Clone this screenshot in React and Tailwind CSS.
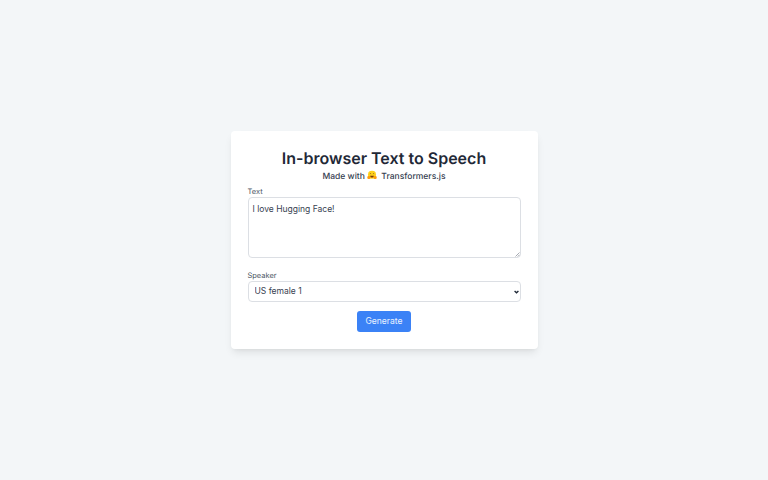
import { useState } from 'react'

function HugIcon() {
  return (
    <svg viewBox="0 0 16 16" className="inline-block w-[10px] h-[10px] mr-[2px] align-[-1.500px]">
      <circle cx="8" cy="7.500" r="6.500" fill="#FFD21E" />
      <path d="M4.500 6.500c.4-1 1.600-1 2 0M9.500 6.500c.4-1 1.600-1 2 0" stroke="#7a4a12" strokeWidth="1" fill="none" />
      <path d="M5 9h6c0 2-1.300 3-3 3s-3-1-3-3z" fill="#7a3b12" />
      <rect x="0.500" y="9.500" width="5" height="5" rx="2" fill="#FF9D0B" />
      <rect x="10.500" y="9.500" width="5" height="5" rx="2" fill="#FF9D0B" />
    </svg>
  )
}

export default function App() {
  const [text, setText] = useState('I love Hugging Face!')

  return (
    <div className="min-h-screen bg-[#f3f6f8] flex items-center justify-center font-['Inter',sans-serif] antialiased [text-rendering:geometricPrecision]">
      <div className="w-[307px] bg-white rounded-[4px] shadow-[0_5px_8px_-2px_rgba(0,0,0,0.1),0_2px_4px_-2px_rgba(0,0,0,0.06)] p-[17px]">
        <h1 className="text-[16px] leading-[20px] font-semibold text-[#1f2937] text-center">In-browser Text to Speech</h1>
        <h2 className="text-[8.53px] leading-[13px] font-medium text-[#374151] text-center mt-[2px] mb-[3px]">
          Made with <HugIcon /> Transformers.js
        </h2>
        <label className="block text-[7.47px] leading-[11px] text-[#4b5563]">Text</label>
        <div className="relative">
          <textarea
            value={text}
            onChange={e => setText(e.target.value)}
            className="block w-full h-[61px] border border-[#dcdfe4] rounded-[4px] px-[4px] pt-[5px] pb-[4px] text-[8.53px] leading-[13px] text-[#374151] resize-none"
          />
          <svg viewBox="0 0 5 5" className="absolute right-[1px] bottom-[1px] w-[5px] h-[5px]">
            <path d="M0.500 4.500L4.500 0.500M2.800 4.500L4.500 2.800" stroke="#6b7280" strokeWidth="0.600" />
          </svg>
        </div>
        <label className="block text-[7.47px] leading-[11px] text-[#4b5563] mt-[12px]">Speaker</label>
        <div className="relative">
          <select className="block w-full h-[21px] border border-[#dcdfe4] rounded-[4px] pl-[6px] text-[8.53px] text-[#374151] bg-white appearance-none">
            <option>US female 1</option>
            <option>US female 2</option>
            <option>US male 1</option>
          </select>
          <svg viewBox="0 0 6 4" className="absolute right-[2px] top-[8.500px] w-[5px] h-[4px] pointer-events-none">
            <path d="M0.700 0.800L3 3L5.300 0.800" stroke="#1f2937" strokeWidth="1.600" fill="none" />
          </svg>
        </div>
        <div className="flex justify-center mt-[9px]">
          <button className="w-[54px] h-[21px] bg-[#3b82f6] text-white/90 text-[8.53px] rounded-[3px]">Generate</button>
        </div>
      </div>
    </div>
  )
}
